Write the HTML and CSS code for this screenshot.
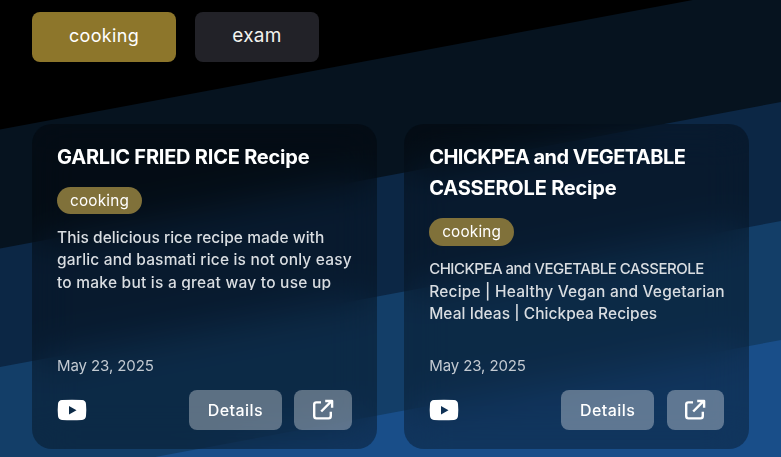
FILE: index.html
```html
<!DOCTYPE html>
<html lang="en">
<head>
<meta charset="utf-8">
<title>Recipes</title>
<link rel="stylesheet" href="styles.css">
</head>
<body>
<svg class="backdrop" viewBox="0 0 781 457" aria-hidden="true">
  <path fill="#06131f" d="M0 129.5 781-16.5V457H0z"/>
  <path fill="#0c2745" d="M0 248.5 781 102V457H0z"/>
  <path fill="#133e68" d="M0 367 781 221V457H0z"/>
  <path fill="#194e89" d="M0 486 781 340V486z"/>
</svg>
<main class="page">
  <nav class="filters">
    <button class="filter filter-active"><span class="f1">cooking</span></button>
    <button class="filter"><span class="f2">exam</span></button>
  </nav>
  <section class="cards">
    <article class="card">
      <h2 class="title"><span class="t1">GARLIC FRIED RICE Recipe</span></h2>
      <span class="tag"><span class="tg">cooking</span></span>
      <p class="desc"><span class="a1">This delicious rice recipe made with</span><br><span class="a2">garlic and basmati rice is not only easy</span><br><span class="a3">to make but is a great way to use up</span></p>
      <time class="date">May 23, 2025</time>
      <footer class="actions">
        <svg class="youtube" viewBox="0 0 30 22"><path fill="#fff" fill-rule="evenodd" d="M5 1.1Q15 .3 25 1.1 28.7 1.4 29 5 29.6 11 29 17 28.7 20.6 25 20.9 15 21.7 5 20.9 1.3 20.6 1 17 .4 11 1 5 1.3 1.4 5 1.1zM12 7v8.4l7.5-4.2z"/></svg>
        <button class="action details">Details</button>
        <button class="action open" aria-label="Open"><svg class="open-icon" viewBox="0 0 22 22"><path d="M9 3.4H4.4Q2.2 3.4 2.2 5.6V17.1Q2.2 19.4 4.4 19.4H16.6Q18.8 19.4 18.8 17.1V12.8M9.2 12.5 19 2.7M13.2 2H20.1V8.8"/></svg></button>
      </footer>
    </article>
    <article class="card">
      <h2 class="title"><span class="t2">CHICKPEA and VEGETABLE</span><br><span class="t3">CASSEROLE Recipe</span></h2>
      <span class="tag"><span class="tg">cooking</span></span>
      <p class="desc"><span class="b1">CHICKPEA and VEGETABLE CASSEROLE</span><br><span class="b2">Recipe | Healthy Vegan and Vegetarian</span><br><span class="b3">Meal Ideas | Chickpea Recipes</span></p>
      <time class="date">May 23, 2025</time>
      <footer class="actions">
        <svg class="youtube" viewBox="0 0 30 22"><path fill="#fff" fill-rule="evenodd" d="M5 1.1Q15 .3 25 1.1 28.7 1.4 29 5 29.6 11 29 17 28.7 20.6 25 20.9 15 21.7 5 20.9 1.3 20.6 1 17 .4 11 1 5 1.3 1.4 5 1.1zM12 7v8.4l7.5-4.2z"/></svg>
        <button class="action details">Details</button>
        <button class="action open" aria-label="Open"><svg class="open-icon" viewBox="0 0 22 22"><path d="M9 3.4H4.4Q2.2 3.4 2.2 5.6V17.1Q2.2 19.4 4.4 19.4H16.6Q18.8 19.4 18.8 17.1V12.8M9.2 12.5 19 2.7M13.2 2H20.1V8.8"/></svg></button>
      </footer>
    </article>
  </section>
</main>
</body>
</html>
```
FILE: styles.css
```css
* { box-sizing: border-box; }
body { margin: 0; width: 781px; height: 457px; overflow: hidden; background: #000; font-family: Inter, sans-serif; color: #fff; }
.backdrop { position: absolute; inset: 0; width: 781px; height: 457px; }
.page { position: relative; padding: 12px 32px 0; }
.filters { display: flex; gap: 19px; }
.filter { width: 124px; height: 50px; padding: 0 0 3px; border: 0; border-radius: 8px; background: #222228; color: #f3f3ee; font: 400 18px/46px Inter, sans-serif; }
.filter-active { width: 144px; background: #8d762b; color: #fff; }
.cards { display: grid; grid-template-columns: 345px 345px; gap: 27.2px; margin-top: 62px; }
.card { display: flex; flex-direction: column; align-items: flex-start; height: 325px; padding: 18.1px 25px 19px; border-radius: 20px; background: rgba(0, 0, 0, .32); backdrop-filter: blur(20px); }
.title { margin: 0; font: 650 20px/31.2px Inter, sans-serif; white-space: nowrap; }
.tag { display: block; width: 85px; height: 27.5px; margin-top: 13.6px; flex: none; border-radius: 14px; background: #80713a; text-align: center; font-size: 15.3px; line-height: 27px; }
.desc { height: 62.6px; flex: none; margin: 12.6px 0 0; overflow: hidden; font-size: 15.5px; font-weight: 450; line-height: 22.5px; color: #d9dde1; white-space: nowrap; }
.date { margin-top: auto; font-size: 15px; line-height: 23px; color: #c3cad2; letter-spacing: -.1px; }
.actions { display: flex; align-items: center; width: 100%; height: 40px; margin-top: 13px; }
.youtube { width: 30px; height: 22px; margin-right: auto; }
.action { height: 40px; padding: 0; border: 0; border-radius: 8px; background: rgba(255, 255, 255, .33); color: #fff; font: 500 16px/40px Inter, sans-serif; }
.details { width: 93.6px; margin-right: 12.2px; letter-spacing: .45px; }
.open { display: grid; place-items: center; width: 57.6px; }
.open-icon { width: 22px; height: 22px; fill: none; stroke: #fff; stroke-width: 2.4; stroke-linejoin: round; }

/* per-line tracking */
.f1 { letter-spacing: .35px; }
.f2 { font-size: 19px; letter-spacing: .3px; }
.tg { letter-spacing: .2px; }
.t1 { letter-spacing: -.22px; }
.t2 { letter-spacing: -.55px; }
.t3 { letter-spacing: -.2px; }
.a1 { letter-spacing: .04px; }
.a2 { letter-spacing: .17px; }
.a3 { letter-spacing: .23px; }
.b1 { font-size: 15px; letter-spacing: -.5px; }
.b2 { letter-spacing: .19px; }
.b3 { letter-spacing: .04px; }
```
